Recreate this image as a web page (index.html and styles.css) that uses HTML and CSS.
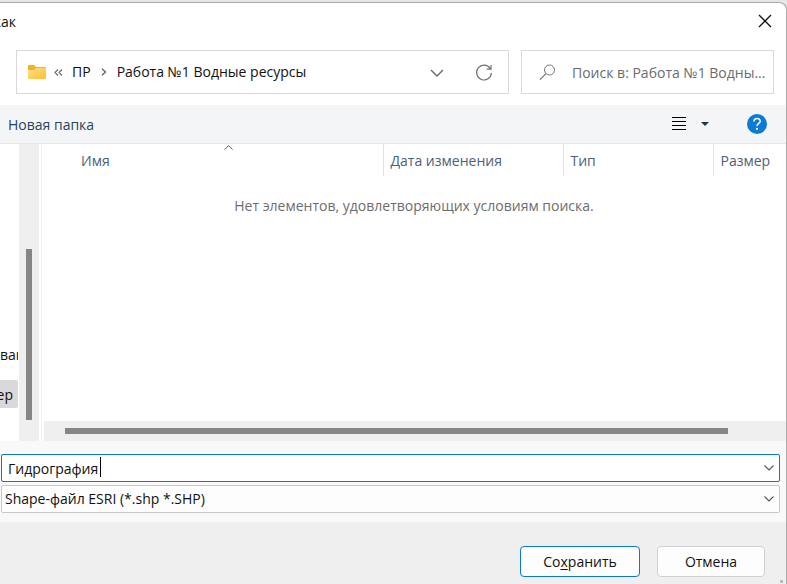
FILE: index.html
```html
<!DOCTYPE html>
<html lang="ru">
<head>
<meta charset="utf-8">
<title>Сохранить как</title>
<link rel="stylesheet" href="styles.css">
</head>
<body>
<div class="dialog">
  <header class="titlebar">
    <h1 class="title"><span>как</span></h1>
    <button class="icon-btn close" type="button" aria-label="Закрыть">
      <svg width="14" height="14" viewBox="0 0 14 14"><path d="M1 1l12 12M13 1L1 13" stroke="#111" stroke-width="1.3" fill="none"/></svg>
    </button>
  </header>

  <div class="location">
    <nav class="address" aria-label="Адрес">
      <svg class="folder" width="18" height="15" viewBox="0 0 18 15">
        <defs><linearGradient id="fg" x1="0" y1="0" x2="1" y2="1"><stop offset="0" stop-color="#ffe08a"/><stop offset="1" stop-color="#fbc02f"/></linearGradient></defs>
        <path d="M0 1q0-1 1-1h5l2 2h9q1 0 1 1v4H0z" fill="#f0b323"/>
        <path d="M0 5h6l2-2h10v10q0 1-1 1H1q-1 0-1-1z" fill="url(#fg)"/>
      </svg>
      <svg class="back" width="9" height="7" viewBox="0 0 9 7"><path d="M4 .5l-3 3 3 3M8 .5l-3 3 3 3" stroke="#666" stroke-width="1.1" fill="none"/></svg>
      <a href="#">ПР</a>
      <svg class="sep" width="6" height="8" viewBox="0 0 6 8"><path d="M1 .7L4.5 4 1 7.3" stroke="#666" stroke-width="1.4" fill="none"/></svg>
      <a href="#">Работа №1 Водные ресурсы</a>
      <button class="icon-btn history" type="button" aria-label="Предыдущие расположения">
        <svg width="14" height="8" viewBox="0 0 14 8"><path d="M1 1l6 6 6-6" stroke="#666" stroke-width="1.4" fill="none"/></svg>
      </button>
      <button class="icon-btn refresh" type="button" aria-label="Обновить">
        <svg width="18" height="18" viewBox="0 0 18 18"><path d="M15.2 4.5A7.4 7.4 0 1 0 16.4 9M16 1v4.2h-4.2" stroke="#707070" stroke-width="1.2" fill="none"/></svg>
      </button>
    </nav>
    <label class="search">
      <svg width="17" height="17" viewBox="0 0 17 17"><circle cx="10.5" cy="6" r="5" stroke="#777" fill="none"/><path d="M7 9.6L1 15.6" stroke="#777" stroke-width="1.2"/></svg>
      <input type="text" aria-label="Поиск" placeholder="Поиск в: Работа №1 Водны...">
    </label>
  </div>

  <div class="toolbar">
    <button class="new-folder" type="button">Новая папка</button>
    <button class="icon-btn view" type="button" aria-label="Вид">
      <svg width="14" height="14" viewBox="0 0 14 14"><path d="M0 .5h14M0 4.5h14M0 8.5h14M0 12.5h14" stroke="#000"/></svg>
    </button>
    <button class="icon-btn more" type="button" aria-label="Дополнительно">
      <svg width="8" height="4" viewBox="0 0 8 4"><path d="M0 0h8L4 4z" fill="#20344c"/></svg>
    </button>
    <button class="icon-btn" type="button" aria-label="Справка">
      <svg width="20" height="20" viewBox="0 0 20 20"><circle cx="10" cy="10" r="10" fill="#0c7bd3"/><path d="M7 7.4C7 3.6 13.2 3.7 13.2 7.2 13.2 9.5 10 9.3 10 12" stroke="#fff" stroke-width="1.5" fill="none"/><circle cx="10" cy="14.8" r="1.1" fill="#fff"/></svg>
    </button>
  </div>

  <main class="browser">
    <ul class="tree">
      <li><span>ван</span></li>
      <li class="selected"><span>ер</span></li>
    </ul>
    <div class="vscroll"><div class="vthumb"></div></div>
    <section class="files">
      <table>
        <colgroup><col class="c-name"><col class="c-date"><col class="c-type"><col></colgroup>
        <thead>
          <tr>
            <th class="name" scope="col">Имя
              <svg class="sort" width="9" height="5" viewBox="0 0 9 5"><path d="M.5 4.6l4-4 4 4" stroke="#555" fill="none"/></svg>
            </th>
            <th scope="col">Дата изменения</th>
            <th scope="col">Тип</th>
            <th scope="col">Размер</th>
          </tr>
        </thead>
        <tbody><tr><td colspan="4">Нет элементов, удовлетворяющих условиям поиска.</td></tr></tbody>
      </table>
      <div class="hscroll"><div class="hthumb"></div></div>
    </section>
  </main>

  <form class="fields">
    <div class="combo">
      <input type="text" class="field filename" aria-label="Имя файла" value="Гидрография">
      <span class="caret"></span>
      <svg class="chev" width="10" height="6" viewBox="0 0 10 6"><path d="M.5 .5L5 5 9.5 .5" stroke="#555" stroke-width="1.1" fill="none"/></svg>
    </div>
    <div class="combo">
      <select class="field filetype" aria-label="Тип файла"><option>Shape-файл ESRI (*.shp *.SHP)</option></select>
      <svg class="chev" width="10" height="6" viewBox="0 0 10 6"><path d="M.5 .5L5 5 9.5 .5" stroke="#555" stroke-width="1.1" fill="none"/></svg>
    </div>
  </form>

  <footer class="actions">
    <button class="btn primary" type="button">Со<u>х</u>ранить</button>
    <button class="btn" type="button">Отмена</button>
    <span class="grip"></span>
  </footer>
</div>
</body>
</html>
```
FILE: styles.css
```css
* { box-sizing: border-box; }
body {
  margin: 0;
  min-height: 100vh;
  display: flex;
  padding-top: 2px;
  background: #e6e6e6;
  font: 14px/20px "Open Sans", "Noto Sans", sans-serif;
  color: #111;
}
button, input, select { font: inherit; color: inherit; }
svg { display: block; flex: none; }
a { color: inherit; text-decoration: none; }
.dialog {
  flex: 1;
  min-width: 0;
  display: flex;
  flex-direction: column;
  background: #fff;
  border: solid #aaa;
  border-width: 1px 1px 0 0;
  border-top-right-radius: 8px;
  overflow: hidden;
}
.icon-btn { display: flex; border: 0; padding: 0; background: none; }

.titlebar {
  height: 47px;
  display: flex;
  align-items: flex-start;
  justify-content: space-between;
  padding: 9px 14px 0 0;
}
.title {
  margin: 0;
  width: 16px;
  display: flex;
  justify-content: flex-end;
  overflow: hidden;
  font-size: 14px;
  font-weight: 400;
}
.close { padding-top: 2px; }

.location {
  display: grid;
  grid-template-columns: 493fr 253fr;
  gap: 12px;
  padding: 0 12px 11px 16px;
}
.address, .search {
  min-width: 0;
  height: 44px;
  display: flex;
  align-items: center;
  border: 1px solid #d9d9d9;
}
.address { padding: 0 15px 0 11px; white-space: nowrap; }
.folder { margin-right: 8px; }
.back { margin-right: 9px; }
.sep { margin: 0 10px; }
.history { margin: 2px 31px 0 auto; }
.refresh { padding-top: 2px; }
.search { padding-left: 17px; gap: 16px; }
.search input {
  flex: 1;
  min-width: 0;
  padding: 2px 0 0;
  border: 0;
  outline: 0;
  background: none;
}
.search input::placeholder { color: #6b6b6b; opacity: 1; }

.toolbar {
  height: 39px;
  display: flex;
  align-items: center;
  padding: 0 19px 0 8px;
  background: #f4f5f7;
  border-bottom: 1px solid #e5e6e8;
}
.new-folder { margin-right: auto; padding: 2px 0 0; border: 0; background: none; color: #24455f; }
.view { margin-right: 15px; }
.more { margin-right: 38px; }

.browser { flex: 1; display: flex; min-height: 0; }
.tree {
  width: 19px;
  margin: 0;
  padding: 0 1px 33px 0;
  list-style: none;
  display: flex;
  flex-direction: column;
  justify-content: flex-end;
  gap: 12px;
}
.tree li {
  height: 28px;
  padding-top: 2px;
  display: flex;
  align-items: center;
  overflow: hidden;
}
.tree .selected {
  justify-content: flex-end;
  padding-right: 5px;
  background: #d9d9d9;
  border-radius: 0 2px 2px 0;
}
.vscroll {
  width: 20px;
  display: flex;
  align-items: flex-end;
  justify-content: center;
  padding-bottom: 21px;
  background: #efefef;
}
.vthumb { width: 6px; height: 62%; background: #868686; }
.files {
  flex: 1;
  min-width: 0;
  display: flex;
  flex-direction: column;
  justify-content: space-between;
  margin-left: 2px;
  border-left: 1px solid #f0f0f0;
}
table { width: 100%; table-layout: fixed; border-collapse: collapse; }
.c-name { width: 341px; }
.c-date { width: 180px; }
.c-type { width: 150px; }
th {
  position: relative;
  height: 32px;
  padding: 2px 0 0 7px;
  border-left: 1px solid #e2e2e2;
  text-align: left;
  font-weight: 400;
  color: #4c6078;
}
th.name { padding-left: 39px; border-left: 0; }
.sort { position: absolute; top: 1px; left: 182px; }
td { padding: 20px 0 0; text-align: center; color: #6d6d6d; }
.hscroll { height: 20px; margin-left: 2px; padding: 7px 58px 7px 21px; background: #efefef; }
.hthumb { height: 6px; background: #868686; }

.fields {
  display: flex;
  flex-direction: column;
  gap: 3px;
  padding: 13px 6px 9px 1px;
  background: #f9f9f9;
}
.combo { position: relative; display: flex; }
.field {
  flex: 1;
  min-width: 0;
  height: 28px;
  margin: 0;
  border: 1px solid #c8c8c8;
  border-radius: 2px;
  background: #fdfdfd;
  outline: 0;
  appearance: none;
}
.filename { padding: 0 24px 0 6px; border-color: #0b78d0; background: #fff; }
.filetype { padding: 0 24px 0 3px; }
.caret { position: absolute; top: 3px; left: 99px; width: 1px; height: 20px; background: #000; }
.chev { position: absolute; top: 11px; right: 6px; pointer-events: none; }

.actions {
  position: relative;
  height: 62px;
  display: flex;
  align-items: flex-start;
  justify-content: flex-end;
  gap: 17px;
  padding: 24px 21px 0;
  background: #efefef;
}
.btn {
  width: 108px;
  height: 31px;
  padding: 0;
  border: 1px solid #d0d0d0;
  border-radius: 4px;
  background: #fdfdfd;
}
.primary { width: 120px; border-color: #0b78d0; }
.btn u { text-underline-offset: 2px; }
.grip { position: absolute; right: 3px; bottom: 1px; width: 3px; height: 3px; background: #bbb; }
```
